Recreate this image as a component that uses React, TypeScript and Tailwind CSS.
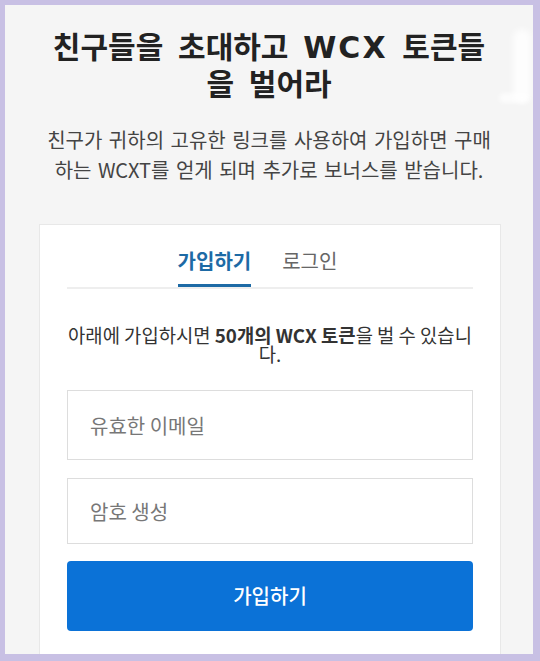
import React from 'react';

const font = { fontFamily: '"Noto Sans CJK KR", "Noto Sans", sans-serif' };
const latin = { fontFamily: '"DejaVu Sans", "Noto Sans CJK KR", sans-serif' };

export default function App() {
    return (
        <div
            className="relative h-[661px] w-[540px] overflow-hidden border-t-[5px] border-l-[5px] border-r-[7px] border-b-[7px] border-[#c8c0e4] bg-[#f5f5f5]"
            style={font}
        >
            {/* white smudge on the right edge */}
            <div className="pointer-events-none absolute right-[2px] top-[24px] h-[74px] w-[18px] rounded-full bg-white/80 blur-[3px]" />
            <div className="pointer-events-none absolute right-[4px] top-[88px] h-[10px] w-[30px] rounded-full bg-white/70 blur-[2px]" />

            <h1 className="mx-auto mt-[22px] w-[445px] text-center text-[30px] font-bold leading-[37px] text-[#222] [word-spacing:8px]">
                친구들을 초대하고{' '}
                <span className="leading-none tracking-[2px]" style={latin}>WCX</span> 토큰들을 벌어라
            </h1>

            <p className="mx-auto mt-[24px] w-[462px] text-center text-[20px] leading-[30px] text-[#444] [word-spacing:2px]">
                친구가 귀하의 고유한 링크를 사용하여 가입하면 구매하는 WCXT를 얻게 되며 추가로 보너스를 받습니다.
            </p>

            <div className="ml-[34px] mt-[39px] w-[462px] border border-[#e8e8e8] bg-white px-[27px] pb-8 pt-[23px]">
                <div className="flex justify-center gap-[31px] border-b-2 border-[#eeeeee] pr-[25px]">
                    <button className="border-b-[3px] border-[#1d6aa5] pb-[10px] text-[20px] font-bold leading-[26px] text-[#1d6aa5]">
                        가입하기
                    </button>
                    <button className="border-b-[3px] border-transparent pb-[10px] text-[20px] leading-[26px] text-[#666]">
                        로그인
                    </button>
                </div>

                <p className="mt-[36px] text-center text-[18.8px] leading-[19px] text-[#333]">
                    아래에 가입하시면 <span className="font-bold">50개의 WCX 토큰</span>을 벌 수 있습니다.
                </p>

                <div className="mt-[27px] flex flex-col gap-[18px]">
                    <input
                        type="email"
                        placeholder="유효한 이메일"
                        className="h-[70px] w-full border border-[#dddddd] px-[22px] text-[20px] text-[#333] outline-none placeholder:text-[#777]"
                    />
                    <input
                        type="password"
                        placeholder="암호 생성"
                        className="h-[66px] w-full border border-[#dddddd] px-[22px] text-[20px] text-[#333] outline-none placeholder:text-[#777]"
                    />
                </div>

                <button className="mt-[17px] h-[70px] w-full rounded-[4px] bg-[#0b72d7] text-[20px] font-medium text-white">
                    가입하기
                </button>
            </div>
        </div>
    );
}
